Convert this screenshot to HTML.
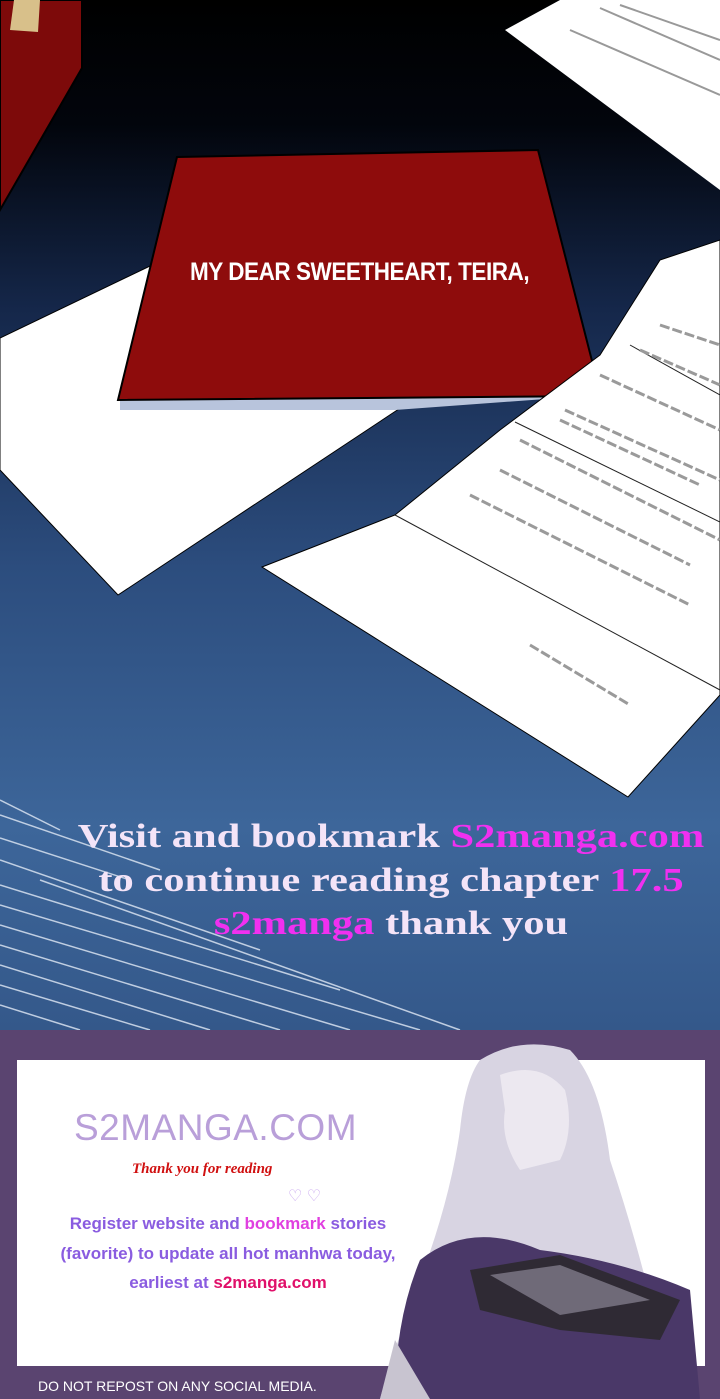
<!DOCTYPE html>
<html><head><meta charset="utf-8"><style>
html,body{margin:0;padding:0}
body{width:720px;height:1399px;position:relative;overflow:hidden;background:#000;font-family:"Liberation Sans",sans-serif}
svg{position:absolute;left:0;top:0}
.t{position:absolute;left:0;width:782px;text-align:center;font-family:"Liberation Serif",serif;font-weight:bold;font-size:34px;color:#f4e4f8;white-space:nowrap;transform:scaleX(1.25);transform-origin:391px 0}
.m{color:#f030f0}
</style></head><body>
<svg width="720" height="1399" viewBox="0 0 720 1399">
<defs>
<linearGradient id="bg" x1="0" y1="0" x2="0" y2="1">
<stop offset="0" stop-color="#000000"/>
<stop offset="0.12" stop-color="#02050c"/>
<stop offset="0.3" stop-color="#15274a"/>
<stop offset="0.55" stop-color="#2c4d7e"/>
<stop offset="0.8" stop-color="#3d669a"/>
<stop offset="1" stop-color="#34588a"/>
</linearGradient>
</defs>
<rect x="0" y="0" width="720" height="1032" fill="url(#bg)"/>
<g stroke="#d8e2f0" stroke-width="1.5" opacity="0.85">
<line x1="0" y1="800" x2="60" y2="830"/>
<line x1="0" y1="815" x2="160" y2="870"/>
<line x1="0" y1="838" x2="130" y2="880"/>
<line x1="0" y1="860" x2="260" y2="950"/>
<line x1="0" y1="885" x2="340" y2="990"/>
<line x1="0" y1="905" x2="420" y2="1030"/>
<line x1="0" y1="925" x2="350" y2="1030"/>
<line x1="0" y1="945" x2="280" y2="1030"/>
<line x1="0" y1="965" x2="210" y2="1030"/>
<line x1="0" y1="985" x2="150" y2="1030"/>
<line x1="0" y1="1005" x2="80" y2="1030"/>
<line x1="40" y1="880" x2="460" y2="1030"/>
</g>
<polygon points="0,0 82,0 82,68 0,210" fill="#7d0a0a" stroke="#000" stroke-width="2"/>
<polygon points="14,0 40,0 38,32 10,30" fill="#d8c08a"/>
<polygon points="505,30 560,0 720,0 720,190" fill="#fff"/>
<g stroke="#999" stroke-width="2" fill="none">
<path d="M600,8 L720,60"/><path d="M570,30 L720,95"/><path d="M620,5 L720,40"/>
</g>
<polygon points="0,338 150,266 420,395 118,595 0,470" fill="#fff" stroke="#000" stroke-width="1"/>
<polygon points="120,398 600,395 395,410 120,410" fill="#b8c4dc"/>
<polygon points="177,157 538,150 601,396 118,400" fill="#8e0c0c" stroke="#000" stroke-width="2"/>
<polygon points="262,567 395,515 500,430 600,355 660,260 720,240 720,695 628,797" fill="#fff" stroke="#000" stroke-width="1"/>
<g stroke="#222" stroke-width="1" fill="none">
<path d="M395,515 L720,690"/><path d="M515,422 L720,522"/><path d="M630,345 L720,395"/>
</g>
<g stroke="#9a9a9a" stroke-width="3" fill="none" stroke-dasharray="10,3">
<path d="M660,325 L720,345"/><path d="M640,350 L720,385"/>
<path d="M600,375 L720,430"/><path d="M565,410 L720,480"/><path d="M560,420 L700,485"/>
<path d="M520,440 L720,540"/><path d="M500,470 L690,565"/><path d="M470,495 L690,605"/>
<path d="M530,645 L630,705"/>
</g>
<rect x="0" y="1030" width="720" height="369" fill="#5a4470"/>
<rect x="17" y="1060" width="688" height="306" fill="#fff"/>
<path d="M480,1060 Q520,1035 570,1050 Q600,1080 610,1160 Q640,1250 660,1340 L700,1399 L380,1399 Q400,1330 420,1280 Q450,1200 460,1130 Q465,1080 480,1060 Z" fill="#d8d4e2"/>
<path d="M500,1075 Q540,1060 565,1090 Q575,1130 560,1160 L520,1170 Q500,1140 505,1110 Z" fill="#ece8f0"/>
<path d="M420,1260 Q470,1220 540,1250 Q620,1260 690,1290 L700,1399 L395,1399 Q395,1320 420,1260 Z" fill="#4a3868"/>
<path d="M470,1270 L560,1255 L680,1300 L660,1340 L560,1330 L480,1310 Z" fill="#2f2a34"/>
<path d="M490,1275 L560,1265 L650,1300 L560,1315 Z" fill="#6f6a78"/>
<path d="M395,1340 L430,1399 L380,1399 Z" fill="#c8c4d0"/>
</svg>
<div class="t" style="top:818px">Visit and bookmark <span class="m">S2manga.com</span></div>
<div class="t" style="top:862px">to continue reading chapter <span class="m">17.5</span></div>
<div class="t" style="top:905px"><span class="m">s2manga</span> thank you</div>
<div style="position:absolute;left:74px;top:1107px;font-size:37px;color:#b99fd9;letter-spacing:0.5px">S2MANGA.COM</div>
<div style="position:absolute;left:132px;top:1161px;font-size:15px;color:#d01010;font-style:italic;font-weight:bold;font-family:'Liberation Serif',serif">Thank you for reading</div>
<div style="position:absolute;left:288px;top:1186px;font-size:16px;color:#c9a8ef">♡ ♡</div>
<div style="position:absolute;left:0;width:456px;text-align:center;top:1209px;font-size:17px;line-height:29.5px;color:#8a5ce0;font-weight:bold">Register website and <span style="color:#e040e0">bookmark</span> stories<br>(favorite) to update all hot manhwa today,<br>earliest at <span style="color:#e0106a">s2manga.com</span></div>
<div style="position:absolute;left:38px;top:1378px;font-size:14px;color:#fff">DO NOT REPOST ON ANY SOCIAL MEDIA.</div>
<div style="position:absolute;left:190px;top:258px;font-size:25px;font-weight:bold;color:#fff;transform:scaleX(0.9);transform-origin:left;letter-spacing:-0.5px;white-space:nowrap">MY DEAR SWEETHEART, TEIRA,</div>
</body></html>
